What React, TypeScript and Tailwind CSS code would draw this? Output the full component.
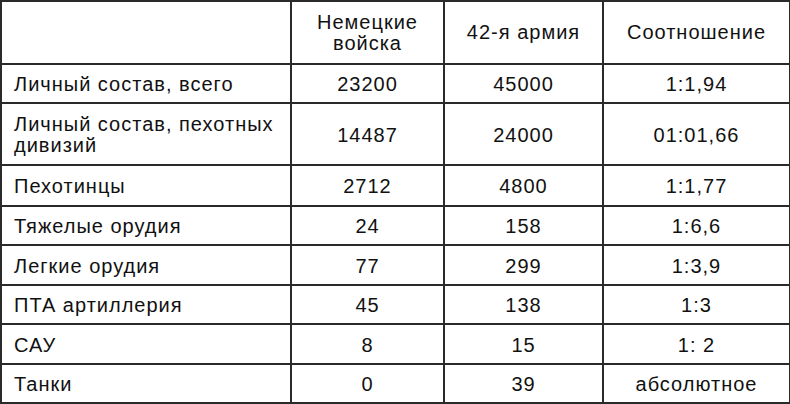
import React from 'react';

type Row = { label: string; de: string; ra: string; ratio: string; h: string };

const rows: Row[] = [
  { label: 'Личный состав, всего', de: '23200', ra: '45000', ratio: '1:1,94', h: 'h-[39px]' },
  { label: 'Личный состав, пехотных дивизий', de: '14487', ra: '24000', ratio: '01:01,66', h: 'h-[62px]' },
  { label: 'Пехотинцы', de: '2712', ra: '4800', ratio: '1:1,77', h: 'h-[41px]' },
  { label: 'Тяжелые орудия', de: '24', ra: '158', ratio: '1:6,6', h: 'h-[39px]' },
  { label: 'Легкие орудия', de: '77', ra: '299', ratio: '1:3,9', h: 'h-[40px]' },
  { label: 'ПТА артиллерия', de: '45', ra: '138', ratio: '1:3', h: 'h-[39px]' },
  { label: 'САУ', de: '8', ra: '15', ratio: '1: 2', h: 'h-[40px]' },
  { label: 'Танки', de: '0', ra: '39', ratio: 'абсолютное', h: 'h-[39px]' },
];

const cell = 'border-2 border-[#2a2a2a] p-0';

export default function App() {
  return (
    <div className="w-[790px] h-[404px] bg-white font-['Liberation_Sans',Arial,sans-serif] text-[20px] tracking-[1px] leading-[21px] text-[#111]">
      <table className="w-[789px] border-collapse table-fixed">
        <colgroup>
          <col className="w-[290px]" />
          <col className="w-[153px]" />
          <col className="w-[159px]" />
          <col className="w-[187px]" />
        </colgroup>
        <thead>
          <tr className="h-[63px]">
            <th className={`${cell} font-normal`}></th>
            <th className={`${cell} font-normal text-center`}>
              Немецкие
              <br />
              войска
            </th>
            <th className={`${cell} font-normal text-center`}>42-я армия</th>
            <th className={`${cell} font-normal text-center`}>Соотношение</th>
          </tr>
        </thead>
        <tbody>
          {rows.map((r) => (
            <tr key={r.label} className={r.h}>
              <td className={`${cell} pl-[12px] pr-1 pt-[2px] text-left`}>
                {r.label === 'Личный состав, пехотных дивизий' ? (
                  <>
                    Личный состав, пехотных
                    <br />
                    дивизий
                  </>
                ) : (
                  r.label
                )}
              </td>
              <td className={`${cell} pt-[2px] text-center`}>{r.de}</td>
              <td className={`${cell} pt-[2px] text-center`}>{r.ra}</td>
              <td className={`${cell} pt-[2px] text-center`}>{r.ratio}</td>
            </tr>
          ))}
        </tbody>
      </table>
    </div>
  );
}
